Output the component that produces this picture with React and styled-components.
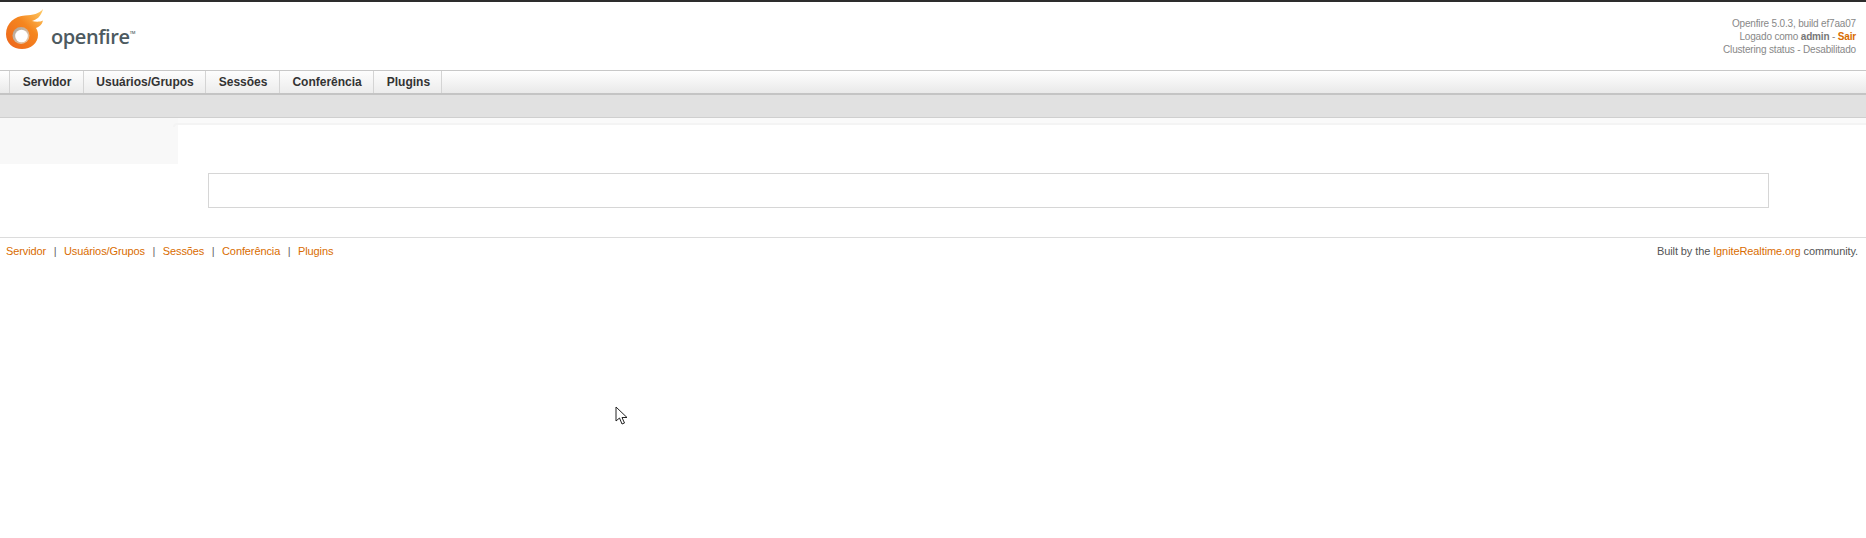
import React from 'react'
import styled, { createGlobalStyle } from 'styled-components'

const Global = createGlobalStyle`
  html, body { margin: 0; padding: 0; background: #fff; }
  body { font-family: "Liberation Sans", Arial, sans-serif; font-size: 11px; color: #555; }
`

const Page = styled.div`
  position: relative;
  width: 1866px;
  height: 538px;
  overflow: hidden;
  border-top: 2px solid #2d2d2d;
  box-sizing: border-box;
`
const Header = styled.div`
  height: 69px;
  display: flex;
  justify-content: space-between;
  box-sizing: border-box;
  border-bottom: 1px solid #c8c8c8;
`
const Logo = styled.div`
  display: flex;
  align-items: flex-start;
  padding: 7px 0 0 6px;
`
const LogoName = styled.span`
  font-family: "Open Sans", sans-serif;
  font-weight: 600;
  font-size: 20px;
  line-height: 24px;
  letter-spacing: -0.4px;
  color: #4d5a60;
  margin: 12px 0 0 5px;
`
const Tm = styled.span`
  font-size: 4px;
  vertical-align: 10px;
  letter-spacing: -0.2px;
`
const Info = styled.div`
  padding: 15px 10px 0 0;
  text-align: right;
  font-size: 10px;
  line-height: 13px;
  letter-spacing: -0.17px;
  color: #888;
`
const Admin = styled.b`
  font-weight: 700;
  color: #777;
`
const Logout = styled.a`
  font-weight: 700;
  color: #d96c00;
`
const Tabs = styled.div`
  height: 24px;
  box-sizing: border-box;
  display: flex;
  padding-left: 9px;
  background: linear-gradient(#ffffff, #e9e9e9);
  border-bottom: 2px solid #c4c4c4;
`
const Tab = styled.div`
  box-sizing: border-box;
  height: 22px;
  padding: 0 11.3px 0 12.7px;
  font-size: 12px;
  font-weight: 700;
  line-height: 22px;
  color: #333;
  border-left: 1px solid #d4d4d4;
  background: linear-gradient(#fdfdfd, #ececec);
  &:last-child { border-right: 1px solid #d4d4d4; }
`
const Band = styled.div`
  height: 23px;
  box-sizing: border-box;
  background: #e1e1e1;
  border-bottom: 1px solid #cfcfcf;
`
const Main = styled.div`
  display: flex;
  height: 119px;
  border-bottom: 1px solid #dcdcdc;
  background: linear-gradient(#fafafa 6px, #fff 6px);
`
const Sidebar = styled.div`
  flex: none;
  width: 178px;
  height: 46px;
  background: #f8f8f8;
`
const Content = styled.div`
  flex: 1;
  box-sizing: border-box;
  height: 114px;
  margin-top: 5px;
  padding: 48px 97px 0 30px;
  border-top: 2px solid #f4f4f4;
  background: #fff;
  position: relative;
  &::before {
    content: "";
    position: absolute;
    left: -5px;
    top: -2px;
    width: 5px;
    height: 4px;
    box-sizing: border-box;
    border-top: 2px solid #f4f4f4;
    border-left: 2px solid #f4f4f4;
    border-top-left-radius: 6px;
  }
`
const EmptyBox = styled.div`
  height: 33px;
  border: 1px solid #d6d6d6;
`
const Footer = styled.div`
  display: flex;
  justify-content: space-between;
  padding: 6px 8px 0 6px;
  font-size: 11px;
  line-height: 14px;
  letter-spacing: -0.1px;
  color: #555;
`
const FootNav = styled.div`
  display: flex;
`
const FootLink = styled.a`
  color: #d96c00;
`
const Sep = styled.span`
  margin: 0 7.5px;
  color: #666;
`
const Cursor = styled.svg`
  position: absolute;
  left: 615px;
  top: 404px;
`

const tabs = ['Servidor', 'Usuários/Grupos', 'Sessões', 'Conferência', 'Plugins']

const Flame = () => (
  <svg width="40" height="42" viewBox="0 0 40 42">
    <defs>
      <linearGradient id="flame" x1="0.1" y1="0.9" x2="0.9" y2="0">
        <stop offset="0" stopColor="#ee6a1c" />
        <stop offset="0.55" stopColor="#f5861f" />
        <stop offset="1" stopColor="#fdc660" />
      </linearGradient>
      <linearGradient id="ring" x1="0" y1="0" x2="1" y2="1">
        <stop offset="0" stopColor="#a9a5a0" />
        <stop offset="1" stopColor="#f3c79c" />
      </linearGradient>
    </defs>
    <path
      fill="url(#flame)"
      d="M37 0C35 8 30 11 26 12C30 13 34 13 37 11.500C36 16 33 18 30 19C32 22 32 25 32 26C32 34 25 40 16 40C7 40 0 34 0 25C0 14 9 7 19 6.500C27 6 33 5 37 0Z"
    />
    <circle cx="15" cy="26.500" r="8.500" fill="url(#ring)" />
    <circle cx="15.500" cy="27" r="6.300" fill="#fff" />
  </svg>
)

export default function App() {
  return (
    <Page>
      <Global />
      <Header>
        <Logo>
          <Flame />
          <LogoName>openfire<Tm>TM</Tm></LogoName>
        </Logo>
        <Info>
          <div>Openfire 5.0.3, build ef7aa07</div>
          <div>Logado como <Admin>admin</Admin> - <Logout>Sair</Logout></div>
          <div>Clustering status - Desabilitado</div>
        </Info>
      </Header>
      <Tabs>
        {tabs.map(label => <Tab key={label}>{label}</Tab>)}
      </Tabs>
      <Band />
      <Main>
        <Sidebar />
        <Content>
          <EmptyBox />
        </Content>
      </Main>
      <Footer>
        <FootNav>
          {tabs.map((l, i) => (
            <React.Fragment key={l}>
              {i > 0 && <Sep>|</Sep>}
              <FootLink>{l}</FootLink>
            </React.Fragment>
          ))}
        </FootNav>
        <div>Built by the <FootLink>IgniteRealtime.org</FootLink> community.</div>
      </Footer>
      <Cursor width="14" height="20" viewBox="0 0 14 20">
        <path d="M1 1V15L4.500 12L7 18L9.500 17L7 11.500H12Z" fill="#fff" stroke="#222" strokeWidth="1" />
      </Cursor>
    </Page>
  )
}
